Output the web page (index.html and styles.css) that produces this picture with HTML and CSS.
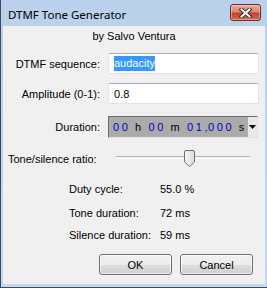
FILE: index.html
```html
<!DOCTYPE html>
<html>
<head>
<meta charset="utf-8">
<link rel="stylesheet" href="styles.css">
</head>
<body>
<div class="window">
  <div class="titlebar">
    <span class="title">DTMF Tone Generator</span>
    <div class="close">
      <svg width="13" height="10" viewBox="0 0 13 10">
        <path d="M2.5 1.5 L10.5 8.5 M10.5 1.5 L2.5 8.5" stroke="#4a2626" stroke-width="4" stroke-linecap="square"/>
        <path d="M2.5 1.5 L10.5 8.5 M10.5 1.5 L2.5 8.5" stroke="#ffffff" stroke-width="2" stroke-linecap="square"/>
      </svg>
    </div>
  </div>
  <div class="client">
    <div class="author">by Salvo Ventura</div>
    <div class="row r1">
      <span class="label">DTMF sequence:</span>
      <div class="textbox"><span class="sel">audacity</span></div>
    </div>
    <div class="row r2">
      <span class="label">Amplitude (0-1):</span>
      <div class="textbox">0.8</div>
    </div>
    <div class="row r3">
      <span class="label">Duration:</span>
      <div class="duration">
        <span class="dtext"><b>00</b> h <b>00</b> m <b>01</b><i>,</i><b>000</b> s</span>
        <span class="drop"><svg width="7" height="4" viewBox="0 0 7 4"><path d="M0 0 H7 L3.5 4 Z" fill="#000"/></svg></span>
      </div>
    </div>
    <div class="row r4">
      <span class="label left">Tone/silence ratio:</span>
      <div class="slider">
        <div class="track"></div>
        <svg class="thumb" width="11" height="17" viewBox="0 0 11 17">
          <defs>
            <linearGradient id="tg" x1="0" y1="0" x2="1" y2="0">
              <stop offset="0" stop-color="#f6f6f6"/>
              <stop offset="1" stop-color="#dcdcdc"/>
            </linearGradient>
          </defs>
          <path d="M2 0.5 H9 A1.5 1.5 0 0 1 10.5 2 V12 L5.5 16.5 L0.5 12 V2 A1.5 1.5 0 0 1 2 0.5 Z" fill="url(#tg)" stroke="#707070"/>
        </svg>
      </div>
    </div>
    <div class="info">
      <span>Duty cycle:</span><span>55.0 %</span>
      <span class="i2">Tone duration:</span><span class="i2">72 ms</span>
      <span class="i3">Silence duration:</span><span class="i3">59 ms</span>
    </div>
    <div class="buttons">
      <div class="btn">OK</div>
      <div class="btn">Cancel</div>
    </div>
  </div>
</div>
</body>
</html>
```

FILE: styles.css
```css
html, body {
  margin: 0;
  padding: 0;
  background: #ffffff;
}
body {
  width: 267px;
  height: 288px;
  overflow: hidden;
  font-family: "Liberation Sans", Arial, sans-serif;
  font-size: 11px;
  color: #000;
}
.window {
  box-sizing: border-box;
  width: 267px;
  height: 288px;
  display: flex;
  flex-direction: column;
  border: 1px solid #3a4a60;
  border-top: none;
  border-right: none;
  background: linear-gradient(#b9d1ea, #c5d8ee);
  padding: 0 2px 3px 2px;
}
.titlebar {
  height: 26px;
  display: flex;
  align-items: flex-start;
  justify-content: space-between;
  flex: none;
}
.title {
  font-family: "Noto Sans", "Open Sans", sans-serif;
  font-size: 11.5px;
  line-height: 14px;
  margin-top: 8px;
  margin-left: 5px;
  color: #000;
}
.close {
  box-sizing: border-box;
  width: 31px;
  height: 17px;
  margin-top: 4px;
  margin-right: 4px;
  border: 1px solid #6b2c24;
  border-radius: 3px;
  background: linear-gradient(#e9ab9b 0%, #da8874 45%, #c4422c 55%, #d06b56 100%);
  box-shadow: inset 0 0 0 1px rgba(255,255,255,0.35);
  display: flex;
  align-items: center;
  justify-content: center;
}
.close svg { display: block; }
.client {
  flex: 1;
  background: #f0f0f0;
  display: flex;
  flex-direction: column;
  padding: 0 5px 0 5px;
}
.author {
  line-height: 14px;
  margin-top: 3px;
  text-align: center;
}
.row {
  display: flex;
  align-items: center;
}
.label {
  width: 92px;
  text-align: right;
  flex: none;
  margin-right: 8px;
}
.label.left { text-align: left; }
.r1 { margin-top: 10px; }
.r2 { margin-top: 9px; }
.r3 { margin-top: 12px; }
.r4 { margin-top: 12px; }
.textbox {
  box-sizing: border-box;
  width: 151px;
  height: 21px;
  background: #fff;
  border: 1px solid #e2e3ea;
  border-top-color: #abadb3;
  border-radius: 2px;
  padding: 0 0 0 5px;
  display: flex;
  align-items: center;
  line-height: 14px;
}
.sel {
  background: #3399ff;
  color: #fff;
  line-height: 15px;
}
.duration {
  box-sizing: border-box;
  width: 150px;
  height: 22px;
  background: #ababab;
  border: 1px solid;
  border-color: #6b6b6b #e3e3e3 #e3e3e3 #6b6b6b;
  display: flex;
  align-items: center;
  justify-content: space-between;
  padding-left: 4px;
}
.dtext {
  font-size: 11px;
  letter-spacing: 2.6px;
  word-spacing: -1px;
  white-space: pre;
  color: #000;
}
.dtext b {
  font-weight: normal;
  color: #0000c0;
}
.dtext i {
  font-style: normal;
  color: #0000c0;
  letter-spacing: 0.5px;
}
.drop {
  width: 9px;
  height: 20px;
  background: #e8e8e8;
  border-left: 1px solid #b0b0b0;
  display: flex;
  align-items: center;
  justify-content: center;
}
.drop svg { display: block; }
.slider {
  position: relative;
  width: 151px;
  height: 17px;
}
.track {
  position: absolute;
  left: 8px;
  right: 9px;
  top: 6px;
  height: 1px;
  border-top: 1px solid #b4b4b4;
  border-bottom: 1px solid #ffffff;
}
.thumb {
  position: absolute;
  left: 76px;
  top: 0;
  display: block;
}
.info {
  display: grid;
  grid-template-columns: 91px auto;
  margin-top: 15px;
  margin-left: 61px;
  line-height: 14px;
}
.i2 { margin-top: 10px; }
.i3 { margin-top: 8px; }
.buttons {
  display: flex;
  justify-content: flex-end;
  gap: 8px;
  margin-top: 12px;
  padding-right: 7px;
}
.btn {
  box-sizing: border-box;
  width: 73px;
  height: 21px;
  border: 1px solid #707070;
  border-radius: 3px;
  background: linear-gradient(#f2f2f2 0%, #ebebeb 50%, #dddddd 51%, #cfcfcf 100%);
  box-shadow: inset 0 0 0 1px rgba(255,255,255,0.6);
  display: flex;
  align-items: center;
  justify-content: center;
  line-height: 14px;
}
```
